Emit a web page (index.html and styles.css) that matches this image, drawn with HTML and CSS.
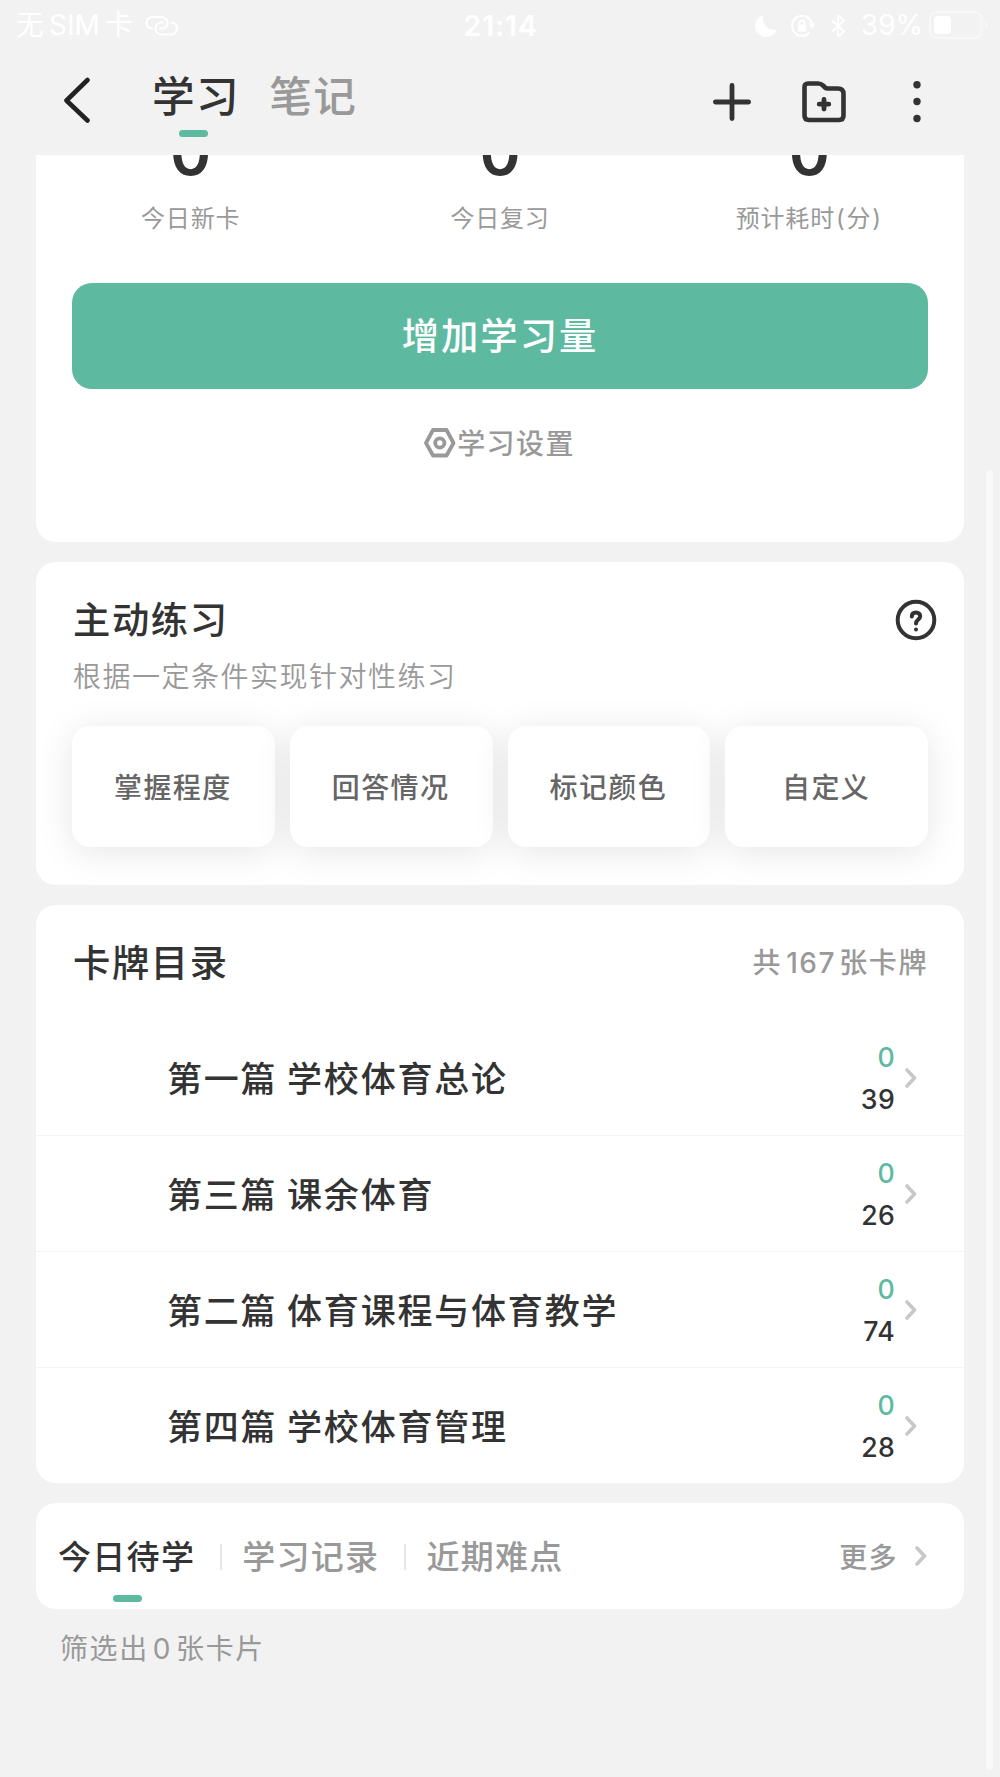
FILE: index.html
```html
<!DOCTYPE html>
<html lang="zh-CN">
<head>
    <meta charset="UTF-8">
    <meta name="viewport" content="width=device-width, initial-scale=1.0">
    <title>学习</title>
    <link rel="stylesheet" href="styles.css">
</head>
<body>
    <div class="status-bar">
        <div class="status-left">
            <span class="carrier"><span>无</span><span>SIM</span><span>卡</span></span>
            <svg class="link-icon" width="34" height="22" viewBox="0 0 34 22" fill="none" stroke="#fff" stroke-width="2.2" stroke-linecap="round">
                <path d="M7 13.5C3.500 13 1.500 11 1.500 8C1.500 4.500 4 2 8 2H16C20 2 22.500 4.500 22.500 8C22.500 11.500 20 13.500 17 13.500H15"/>
                <path d="M27 7.500C30.500 8.500 32 10.500 32 13C32 17 29.500 19.500 26 19.500H17C13 19.500 10.500 17 10.500 13.500C10.500 10 13 7.500 16 7.500H18"/>
            </svg>
        </div>
        <div class="time">21:14</div>
        <div class="status-right">
            <svg class="moon-icon" width="24" height="24" viewBox="0 0 24 24" fill="#fff">
                <path d="M9.500 1C7.500 9 13 17.500 23 15.500C21 20.500 17 23 12.500 23C6 23 1 18 1 12C1 7 4.500 2.500 9.500 1Z"/>
            </svg>
            <svg class="lock-icon" width="26" height="24" viewBox="0 0 26 24" fill="none" stroke="#fff" stroke-width="2">
                <path d="M19.500 18.500A10 10 0 1 1 22 11"/>
                <path d="M18.500 9.500H25.500L22 14.500Z" fill="#fff" stroke="none"/>
                <rect x="8" y="10.500" width="8" height="7" rx="1" fill="#fff" stroke="none"/>
                <path d="M9.500 11V9A2.500 2.500 0 0 1 14.500 9V11" stroke-width="1.500"/>
            </svg>
            <svg class="bluetooth-icon" width="14" height="24" viewBox="0 0 14 24" fill="none" stroke="#fff" stroke-width="1.800" stroke-linejoin="round">
                <path d="M1 6.500L13 17.500L7 22.500V1.500L13 6.500L1 17.500"/>
            </svg>
            <span class="battery-text">39%</span>
            <svg class="battery-icon" width="60" height="28" viewBox="0 0 60 28">
                <rect x="1" y="1" width="51.500" height="26" rx="7" fill="none" stroke="#f8f8f8" stroke-width="2"/>
                <rect x="5" y="5" width="17" height="18" rx="3.500" fill="#fff"/>
                <path d="M56 10Q61 14 56 18Z" fill="#f8f8f8"/>
            </svg>
        </div>
    </div>

    <header class="nav">
        <svg class="back-icon" width="26" height="46" viewBox="0 0 26 46" fill="none" stroke="#222" stroke-width="4.600" stroke-linecap="round" stroke-linejoin="round">
            <path d="M23.500 3L2.500 23.500L23.500 43.500"/>
        </svg>
        <div class="nav-tab active">学习</div>
        <div class="nav-tab">笔记</div>
        <div class="nav-actions">
            <svg width="40" height="40" viewBox="0 0 40 40" fill="none" stroke="#333" stroke-width="4.800" stroke-linecap="round">
                <path d="M20 3.400V36.600M3.400 20H36.600"/>
            </svg>
            <svg class="folder-icon" width="44" height="42" viewBox="0 0 44 42" fill="none" stroke="#333" stroke-width="4.600" stroke-linecap="round" stroke-linejoin="round">
                <path d="M2.500 6Q2.500 2.500 6 2.500H16Q19 2.500 21 4.500L23 6.500Q24 7.500 26 7.500H36Q41.500 7.500 41.500 13V34.500Q41.500 39 37 39H7Q2.500 39 2.500 34.500Z"/>
                <path d="M22 18.500V28M17.200 23.200H26.800" stroke-width="4.800"/>
            </svg>
            <svg class="more-icon" width="8" height="42" viewBox="0 0 8 42" fill="#333">
                <circle cx="4" cy="3.700" r="3.700"/>
                <circle cx="4" cy="20.500" r="3.700"/>
                <circle cx="4" cy="37.500" r="3.700"/>
            </svg>
        </div>
    </header>

    <main class="content">
        <section class="card today-card">
            <div class="stats">
                <div class="stat"><b>0</b><span>今日新卡</span></div>
                <div class="stat"><b>0</b><span>今日复习</span></div>
                <div class="stat"><b>0</b><span>预计耗时<i>(</i>分<i>)</i></span></div>
            </div>
            <button class="study-btn">增加学习量</button>
            <div class="settings">
                <svg width="34" height="32" viewBox="0 0 34 32" fill="none" stroke="#999" stroke-width="3.800" stroke-linejoin="round">
                    <path d="M10 3H23.500L30.500 16L23.500 28.500H10L3 16Z"/>
                    <circle cx="16.800" cy="16" r="4.600"/>
                </svg>
                <span>学习设置</span>
            </div>
        </section>

        <section class="card practice-card">
            <div class="card-head">
                <h2>主动练习</h2>
                <svg class="help-icon" width="42" height="42" viewBox="0 0 42 42" fill="none" stroke="#333" stroke-linecap="round">
                    <circle cx="21" cy="21" r="18.300" stroke-width="4"/>
                    <path d="M16.800 17.500C16.800 15 18.500 13.500 21 13.500C23.500 13.500 25.200 15 25.200 17.200C25.200 20.500 21 20.500 21 24.500" stroke-width="4"/>
                    <circle cx="21" cy="30.500" r="2" fill="#333" stroke="none"/>
                </svg>
            </div>
            <p class="subtitle">根据一定条件实现针对性练习</p>
            <div class="tiles">
                <div class="tile">掌握程度</div>
                <div class="tile">回答情况</div>
                <div class="tile">标记颜色</div>
                <div class="tile">自定义</div>
            </div>
        </section>

        <section class="card catalog-card">
            <div class="catalog-head">
                <h2>卡牌目录</h2>
                <span class="total">共<i>167</i>张卡牌</span>
            </div>
            <div class="chapter">
                <span class="chapter-name">第一篇 学校体育总论</span>
                <div class="counts"><em>0</em><b>39</b></div>
                <svg class="chevron" width="12" height="20" viewBox="0 0 12 20"><path d="M2 2L9.500 10L2 18"/></svg>
            </div>
            <div class="chapter">
                <span class="chapter-name">第三篇 课余体育</span>
                <div class="counts"><em>0</em><b>26</b></div>
                <svg class="chevron" width="12" height="20" viewBox="0 0 12 20"><path d="M2 2L9.500 10L2 18"/></svg>
            </div>
            <div class="chapter">
                <span class="chapter-name">第二篇 体育课程与体育教学</span>
                <div class="counts"><em>0</em><b>74</b></div>
                <svg class="chevron" width="12" height="20" viewBox="0 0 12 20"><path d="M2 2L9.500 10L2 18"/></svg>
            </div>
            <div class="chapter">
                <span class="chapter-name">第四篇 学校体育管理</span>
                <div class="counts"><em>0</em><b>28</b></div>
                <svg class="chevron" width="12" height="20" viewBox="0 0 12 20"><path d="M2 2L9.500 10L2 18"/></svg>
            </div>
        </section>

        <section class="card record-card">
            <div class="record-tab active">今日待学</div>
            <div class="record-tab">学习记录</div>
            <div class="record-tab">近期难点</div>
            <div class="more">更多</div>
            <svg class="chevron" width="12" height="20" viewBox="0 0 12 20"><path d="M2 2L9.500 10L2 18"/></svg>
        </section>

        <p class="filter-result">筛选出<i>0</i>张卡片</p>
    </main>

    <div class="scrollbar"></div>
</body>
</html>
```
FILE: styles.css
```css
:root {
    --primary-color: #5dbaa1;
    --background-color: #f2f2f2;
    --text-color: #333;
    --muted-color: #999;
}

* {
    box-sizing: border-box;
}

body {
    font-family: Inter, 'Noto Sans CJK SC', sans-serif;
    margin: 0;
    height: 1777px;
    overflow: hidden;
    position: relative;
    display: flex;
    flex-direction: column;
    background: var(--background-color);
    color: var(--text-color);
}

svg {
    display: block;
    flex: none;
}

i,
em {
    font-style: normal;
}

h2,
p {
    margin: 0;
}

/* status bar */
.status-bar {
    height: 50px;
    flex: none;
    display: grid;
    grid-template-columns: 1fr auto 1fr;
    align-items: center;
    padding: 1px 11px 0 16px;
    color: #fff;
    font-size: 28px;
    line-height: 49px;
}

.status-left,
.status-right {
    display: flex;
    align-items: center;
}

.carrier {
    display: flex;
    gap: 5px;
}

.link-icon {
    margin-left: 12px;
}

.time {
    font-size: 29px;
    font-weight: 600;
    letter-spacing: 0.7px;
    margin-right: 4px;
}

.status-right {
    justify-content: flex-end;
}

.lock-icon {
    margin-left: 12px;
}

.bluetooth-icon {
    margin-left: 15px;
}

.battery-text {
    margin-left: 16px;
}

.battery-icon {
    margin: -2px 0 0 6px;
}

/* top navigation */
.nav {
    height: 105px;
    flex: none;
    display: flex;
    align-items: flex-start;
    padding: 0 79px 0 64px;
}

.back-icon {
    margin-top: 27px;
}

.nav-tab {
    position: relative;
    margin-left: 29px;
    font-size: 42.6px;
    line-height: 46px;
    margin-top: 24px;
    letter-spacing: 1.5px;
    font-weight: 500;
    color: var(--muted-color);
}

.back-icon + .nav-tab {
    margin-left: 62px;
}

.nav-tab.active {
    color: var(--text-color);
}

.nav-tab.active::after,
.record-tab.active::after {
    content: '';
    position: absolute;
    left: 50%;
    width: 29px;
    height: 7px;
    border-radius: 3.5px;
    background: var(--primary-color);
}

.nav-tab.active::after {
    top: 56px;
    margin-left: -17px;
}

.nav-actions {
    display: flex;
    align-items: center;
    margin-left: auto;
    margin-top: 31px;
}

.folder-icon {
    margin-left: 50px;
}

.more-icon {
    margin-left: 67px;
}

/* scrolled content */
.content {
    flex: 1;
    overflow: hidden;
    padding: 0 36px;
}

.card {
    background: #fff;
    border-radius: 20px;
    margin-bottom: 20px;
}

.today-card {
    height: 447px;
    margin-top: -60px;
    padding: 30px 36px 0;
}

.stats {
    display: flex;
    margin: 0 -36px;
}

.stat {
    flex: 1;
    display: flex;
    flex-direction: column;
    align-items: center;
}

.stat b {
    font-size: 62.5px;
    font-weight: 600;
    line-height: 54px;
}

.stat span {
    margin-top: 23px;
    font-size: 24px;
    line-height: 34px;
    letter-spacing: 0.8px;
    color: var(--muted-color);
}

.stat i {
    margin: 0 1px;
}

.study-btn {
    display: block;
    width: 100%;
    height: 106px;
    margin-top: 46.5px;
    padding: 0 0 3px;
    border: none;
    border-radius: 20px;
    background: var(--primary-color);
    color: #fff;
    font-family: inherit;
    font-size: 37.3px;
    font-weight: 500;
    letter-spacing: 2px;
}

.settings {
    display: flex;
    justify-content: center;
    align-items: center;
    height: 40px;
    margin-top: 34px;
    padding-right: 2px;
    font-size: 28px;
    font-weight: 500;
    letter-spacing: 1.4px;
    color: var(--muted-color);
}

.settings span {
    margin-top: -2px;
}

.practice-card {
    height: 323px;
    padding: 30px 36px 0;
}

.card-head {
    display: flex;
    justify-content: space-between;
    align-items: flex-start;
    height: 54px;
    margin-right: -9px;
}

.help-icon {
    margin-top: 7px;
}

h2 {
    margin: 2px 0 0 1px;
    font-size: 37.3px;
    font-weight: 500;
    line-height: 54px;
    letter-spacing: 1.6px;
}

.subtitle {
    margin: 11px 0 0 1px;
    font-size: 28px;
    font-weight: 350;
    line-height: 40px;
    letter-spacing: 1.5px;
    color: var(--muted-color);
}

.tiles {
    display: flex;
    gap: 15px;
    margin-top: 29px;
}

.tile {
    flex: 1;
    height: 121px;
    display: flex;
    align-items: center;
    justify-content: center;
    padding: 0 1px 2px 0;
    border-radius: 18px;
    background: #fff;
    box-shadow: 0 5px 36px rgba(0, 0, 0, 0.1);
    font-size: 28px;
    font-weight: 500;
    letter-spacing: 1.4px;
    color: #666;
}

.catalog-card {
    height: 578px;
}

.catalog-head {
    display: flex;
    justify-content: space-between;
    align-items: center;
    height: 115px;
    padding: 0 36px;
}

.catalog-head h2 {
    margin-top: 3px;
}

.total {
    font-size: 28px;
    font-weight: 500;
    letter-spacing: 1.6px;
    margin-top: -3px;
    color: var(--muted-color);
}

.total i {
    margin: 0 3px 0 4px;
    font-weight: 550;
}

.chapter {
    display: flex;
    align-items: center;
    height: 116px;
    padding: 0 47px 0 131px;
    border-bottom: 1px solid #f3f3f3;
}

.chapter:last-child {
    height: 115px;
    border-bottom: none;
}

.chapter-name {
    flex: 1;
    margin-top: -3px;
    font-size: 35px;
    letter-spacing: 1.8px;
    word-spacing: -1.5px;
    font-weight: 500;
}

.counts {
    display: flex;
    flex-direction: column;
    align-items: flex-end;
    margin-right: 10px;
    font-size: 26.7px;
    font-weight: 550;
    line-height: 42px;
    letter-spacing: 0.3px;
}

.counts em {
    color: var(--primary-color);
}

.counts b {
    font-weight: 550;
}

.chevron {
    fill: none;
    stroke: #c8c8c8;
    stroke-width: 3.6;
    stroke-linecap: round;
    stroke-linejoin: round;
}

.record-card {
    display: flex;
    align-items: center;
    height: 106px;
    padding: 0 37px 0 22px;
    margin-bottom: 19px;
}

.record-tab {
    position: relative;
    font-size: 33px;
    line-height: 50px;
    letter-spacing: 1.3px;
    color: var(--muted-color);
    font-weight: 500;
    margin-top: 2px;
}

.record-tab + .record-tab {
    display: flex;
    align-items: center;
}

.record-tab + .record-tab::before {
    content: '';
    width: 2px;
    height: 26px;
    margin: 0 20px 0 25px;
    background: #e6e6e6;
}

.record-tab.active {
    color: var(--text-color);
}

.record-tab.active::after {
    top: 63px;
    margin-left: -14px;
}

.more {
    margin-left: auto;
    margin-right: 17px;
    font-size: 28px;
    font-weight: 500;
    letter-spacing: 1.4px;
    color: var(--muted-color);
}

.filter-result {
    padding: 1px 0 0 24px;
    font-size: 28px;
    line-height: 40px;
    letter-spacing: 1.6px;
    color: var(--muted-color);
}

.filter-result i {
    margin: 0 4px;
}

/* scroll indicator floats over the page */
.scrollbar {
    position: absolute;
    top: 470px;
    right: 7px;
    width: 7px;
    height: 1300px;
    border-radius: 4px;
    background: #f9f9f9;
}
```
